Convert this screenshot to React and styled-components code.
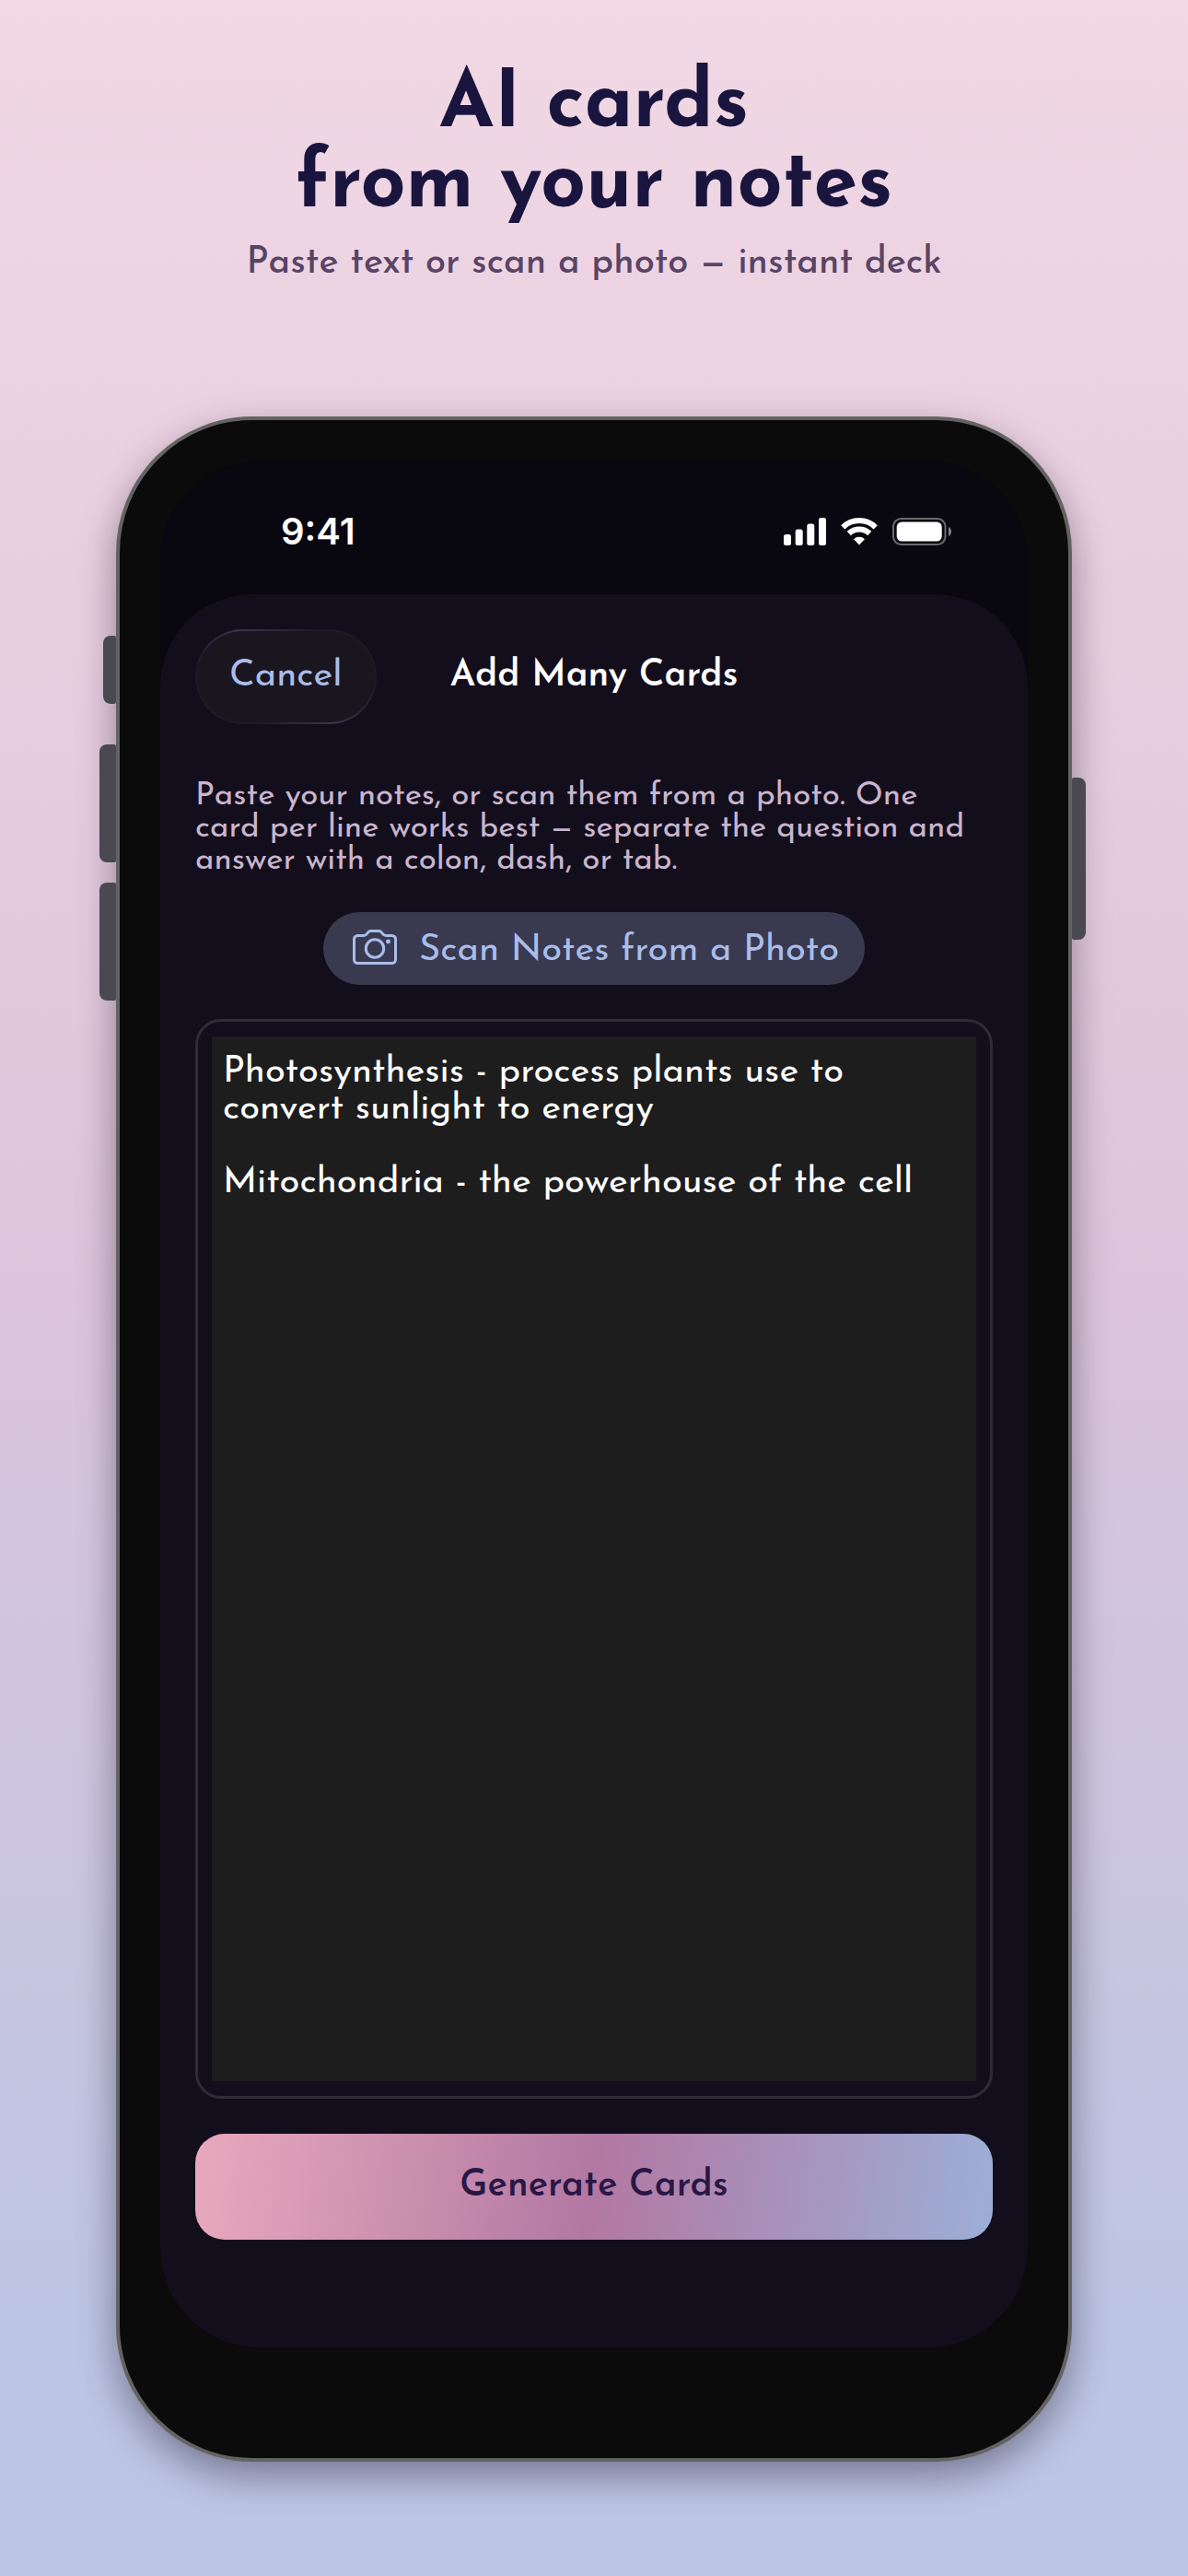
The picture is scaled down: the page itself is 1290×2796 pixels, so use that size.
import React, { useState } from 'react';
import styled, { createGlobalStyle } from 'styled-components';

const NOTES = `Photosynthesis - process plants use to convert sunlight to energy

Mitochondria - the powerhouse of the cell`;

const App = () => {
    const [notes, setNotes] = useState(NOTES);

    return (
        <StyledPage>
            <GlobalStyle />
            <StyledHero>
                <h1>AI cards<br />from your notes</h1>
                <p>Paste text or scan a photo — instant deck</p>
            </StyledHero>
            <StyledPhone>
                <StyledSideKey $side='left' $top={234} $height={74} $depth={14} />
                <StyledSideKey $side='left' $top={352} $height={128} $depth={18} />
                <StyledSideKey $side='left' $top={502} $height={128} $depth={18} />
                <StyledSideKey $side='right' $top={388} $height={176} $depth={15} />
                <StyledScreen>
                    <StatusBar />
                    <StyledSheet>
                        <StyledNav>
                            <StyledCancel type='button'>Cancel</StyledCancel>
                            <h2>Add Many Cards</h2>
                        </StyledNav>
                        <StyledHint htmlFor='notes'>
                            Paste your notes, or scan them from a photo. One card per line works
                            best — separate the question and answer with a colon, dash, or tab.
                        </StyledHint>
                        <StyledScan type='button'>
                            <CameraIcon />
                            Scan Notes from a Photo
                        </StyledScan>
                        <StyledEditor>
                            <StyledNotes
                                id='notes'
                                spellCheck={false}
                                value={notes}
                                onChange={(e) => setNotes(e.target.value)}
                            />
                        </StyledEditor>
                        <StyledGenerate type='button'>Generate Cards</StyledGenerate>
                    </StyledSheet>
                </StyledScreen>
            </StyledPhone>
        </StyledPage>
    )
}

const StatusBar = () => (
    <StyledStatus>
        <time>9:41</time>
        <StyledIndicators>
            <svg width='46' height='30' viewBox='0 0 46 30' fill='#fff'>
                <rect x='0' y='18' width='8' height='12' rx='2.5' />
                <rect x='12.7' y='12.5' width='8' height='17.5' rx='2.5' />
                <rect x='25.3' y='6.5' width='8' height='23.5' rx='2.5' />
                <rect x='38' y='0' width='8' height='30' rx='2.5' />
            </svg>
            <svg width='40' height='30' viewBox='0 0 40 30' fill='none'>
                <path d='M2.3 10.3a25.2 25.2 0 0 1 35.4 0' stroke='#fff' strokeWidth='6' />
                <path d='M8.8 17a16 16 0 0 1 22.4 0' stroke='#fff' strokeWidth='6' />
                <path d='M20 29.5l-6-6.2a8.6 8.6 0 0 1 12 0z' fill='#fff' />
            </svg>
            <svg width='64' height='30' viewBox='0 0 64 30'>
                <rect x='1' y='1' width='56.5' height='28' rx='8.5' fill='none' stroke='#6b6a6f' strokeWidth='2' />
                <rect x='4.7' y='4.5' width='49' height='21' rx='5.5' fill='#fff' />
                <path d='M61 10c4 1.6 4 8.4 0 10z' fill='#84838a' />
            </svg>
        </StyledIndicators>
    </StyledStatus>
)

const CameraIcon = () => (
    <svg width='48' height='38' viewBox='0 0 48 38' fill='none' stroke='#a9bdea' strokeWidth='3'>
        <path d='M5.5 6.5h6.5c1.5 0 2.3-.5 3.2-1.6l1.6-2c.8-1 1.5-1.4 2.7-1.4h9c1.2 0 1.9.4 2.7 1.4l1.6 2c.9 1.1 1.7 1.6 3.2 1.6h6.5a4 4 0 0 1 4 4v22a4 4 0 0 1-4 4h-37a4 4 0 0 1-4-4v-22a4 4 0 0 1 4-4z' />
        <circle cx='24' cy='20.5' r='9.7' />
        <circle cx='38.5' cy='13' r='2.4' fill='#a9bdea' stroke='none' />
    </svg>
)

const GlobalStyle = createGlobalStyle`
    * {
        margin: 0;
        padding: 0;
        box-sizing: border-box;
    }
    body {
        font-family: 'Josefin Sans', Lato, sans-serif;
    }
    button, textarea {
        font-family: inherit;
        border: none;
    }
    button {
        cursor: pointer;
    }
`

const StyledPage = styled.div`
    display: flex;
    flex-direction: column;
    gap: 140px;
    min-height: 100vh;
    padding: 72px 126px 124px;
    background: linear-gradient(#f2d8e4 0%, #dcc5dc 50%, #bcc5e3 90%, #bcc5e3 100%);
`

const StyledHero = styled.header`
    text-align: center;
    h1 {
        font-size: 86px;
        line-height: 87px;
        font-weight: 700;
        color: #1a153f;
    }
    p {
        margin-top: 14px;
        font-size: 40px;
        line-height: 52px;
        font-weight: 500;
        color: #594466;
    }
`

const StyledPhone = styled.main`
    position: relative;
    flex: 1;
    display: flex;
    padding: 44px 44px 120px;
    border: 4px solid #636363;
    border-radius: 148px;
    background: #0b0b0c;
    box-shadow: 0 16px 40px rgba(20, 10, 30, 0.4);
`

// hardware buttons sticking out of the frame
const StyledSideKey = styled.span`
    position: absolute;
    top: ${({ $top }) => $top}px;
    ${({ $side, $depth }) => `${$side}: -${$depth + 4}px;`}
    width: ${({ $depth }) => $depth}px;
    height: ${({ $height }) => $height}px;
    border-radius: ${({ $side }) => ($side === 'left' ? '8px 2px 2px 8px' : '2px 8px 8px 2px')};
    background: #4a4851;
`

const StyledScreen = styled.div`
    flex: 1;
    display: flex;
    flex-direction: column;
    overflow: hidden;
    border-radius: 108px;
    background: #09070f;
`

const StyledStatus = styled.div`
    display: flex;
    align-items: center;
    justify-content: space-between;
    height: 145px;
    padding: 8px 83px 0 131px;
    color: #fff;
    time {
        font-family: Inter, sans-serif;
        font-size: 40px;
        line-height: 48px;
        font-weight: 600;
    }
`

const StyledIndicators = styled.div`
    display: flex;
    gap: 16px;
`

const StyledSheet = styled.section`
    flex: 1;
    display: flex;
    flex-direction: column;
    padding: 38px 38px 117px;
    border-radius: 100px 100px 0 0;
    background: #130e1c;
`

const StyledNav = styled.div`
    display: grid;
    grid-template-columns: 1fr auto 1fr;
    align-items: center;
    margin-bottom: 61px;
    h2 {
        padding-bottom: 2px;
        font-size: 40px;
        line-height: 48px;
        font-weight: 600;
        color: #fff;
    }
`

// rim is lit from the top left and fades out at the other two corners
const StyledCancel = styled.button`
    justify-self: start;
    height: 103px;
    padding: 0 35px 2px;
    border: 2px solid transparent;
    border-radius: 52px;
    background:
        linear-gradient(#1a161f, #1a161f) padding-box,
        linear-gradient(45deg, #1e1926 22%, #3a3350 50%, #1e1926 78%) border-box;
    color: #a9bdea;
    font-size: 40px;
    line-height: 48px;
`

const StyledHint = styled.label`
    padding-right: 16px;
    font-size: 35px;
    line-height: 35px;
    color: #c9b5ce;
`

const StyledScan = styled.button`
    align-self: center;
    display: flex;
    align-items: center;
    gap: 24px;
    height: 79px;
    margin: 38px 0 37px;
    padding: 4px 28px 0 32px;
    border-radius: 40px;
    background: #393a50;
    color: #a9bdea;
    font-size: 40px;
    svg {
        margin-bottom: 8px;
    }
`

const StyledEditor = styled.div`
    flex: 1;
    display: flex;
    padding: 16px 15px;
    border: 3px solid #2f2b36;
    border-radius: 28px;
`

const StyledNotes = styled.textarea`
    flex: 1;
    padding: 19px 12px;
    resize: none;
    outline: none;
    background: #1d1d1e;
    color: #fff;
    font-size: 40px;
    line-height: 40px;
`

const StyledGenerate = styled.button`
    height: 115px;
    margin-top: 38px;
    padding-bottom: 2px;
    border-radius: 32px;
    background: linear-gradient(98deg, #e8a9bd 0%, #b278a2 50%, #9cafd7 100%);
    color: #2a1745;
    font-size: 40px;
    font-weight: 600;
`

export default App;
